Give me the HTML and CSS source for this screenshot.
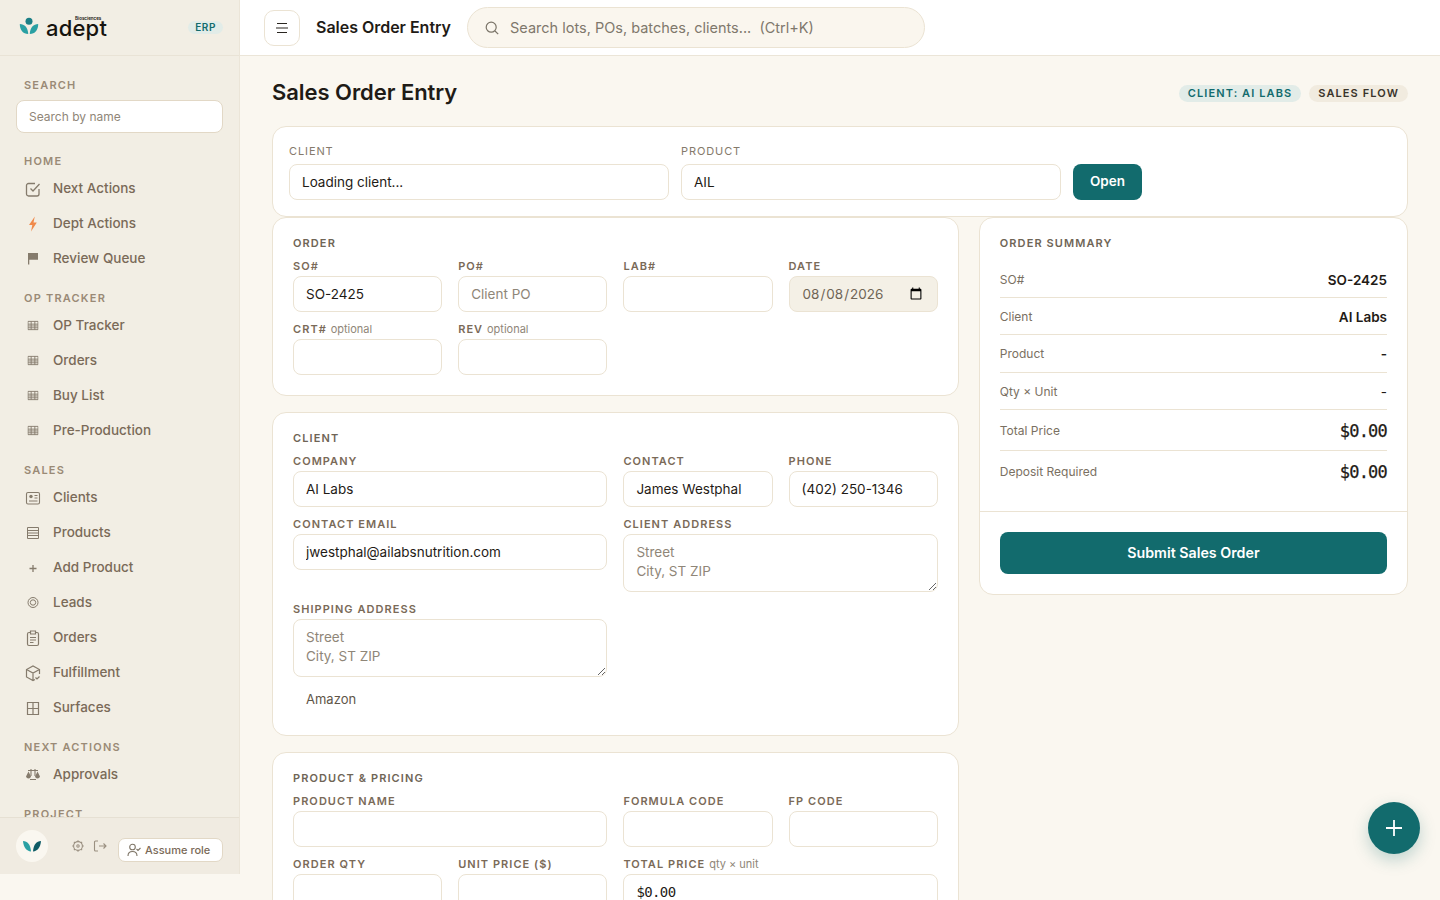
FILE: index.html
```html
<!DOCTYPE html>
<html lang="en">
<head>
  <meta charset="utf-8">
  <title>Sales Order Entry</title>
  <link rel="stylesheet" href="styles.css">
</head>
<body>
  <svg class="defs" width="0" height="0">
    <symbol id="i-table" viewBox="0 0 12 12">
      <path d="M.5 1.500h11v9H.5zM.5 4.500h11M.5 6.500h11M.5 8.500h11M4 1.500v9M8 1.500v9" fill="none" stroke="currentColor"/>
    </symbol>
  </svg>

  <aside class="sidebar">
    <div class="brand">
      <svg class="brand-mark" width="20" height="20" viewBox="0 0 20 20">
        <circle cx="10" cy="4.200" r="3.500" fill="#1c7f86"/>
        <path d="M.8 7c4.700 0 8.200 3.400 8.400 10C4 17 .8 13 .8 7z" fill="#2aa0a3"/>
        <path d="M19.200 7c-4.700 0-8.200 3.400-8.400 10C16 17 19.200 13 19.200 7z" fill="#2aa0a3"/>
      </svg>
      <div class="brand-name"><span class="brand-sub">Biosciences</span>adept</div>
      <span class="erp">ERP</span>
    </div>

    <div class="side-scroll">
      <div class="side-label">Search</div>
      <input class="side-search" type="text" placeholder="Search by name">

      <div class="side-label group">Home</div>
      <a class="nav-item">
        <svg viewBox="0 0 18 18"><path d="M15 9v5a2 2 0 0 1-2 2H4.500a2 2 0 0 1-2-2V5.500a2 2 0 0 1 2-2H11M6.500 8.500l2.500 2.500 6.500-7" fill="none" stroke="currentColor" stroke-width="1.300"/></svg>
        Next Actions
      </a>
      <a class="nav-item">
        <svg viewBox="0 0 18 18"><path d="M10.800 1.500 5 10h3.300L7 16.500 12.800 7.500H9.500z" fill="#f08a4b"/></svg>
        Dept Actions
      </a>
      <a class="nav-item">
        <svg viewBox="0 0 18 18"><path d="M4 3h10v6.800H5.300V14.500H4z" fill="currentColor"/></svg>
        Review Queue
      </a>

      <div class="side-label group">OP Tracker</div>
      <a class="nav-item"><svg viewBox="0 0 18 18"><use href="#i-table" x="3.500" y="3" width="11" height="11"/></svg>OP Tracker</a>
      <a class="nav-item"><svg viewBox="0 0 18 18"><use href="#i-table" x="3.500" y="3" width="11" height="11"/></svg>Orders</a>
      <a class="nav-item"><svg viewBox="0 0 18 18"><use href="#i-table" x="3.500" y="3" width="11" height="11"/></svg>Buy List</a>
      <a class="nav-item"><svg viewBox="0 0 18 18"><use href="#i-table" x="3.500" y="3" width="11" height="11"/></svg>Pre-Production</a>

      <div class="side-label group">Sales</div>
      <a class="nav-item">
        <svg viewBox="0 0 18 18"><g fill="none" stroke="currentColor" stroke-width="1.100"><rect x="2.500" y="3.500" width="13" height="11.500" rx="1.500"/><path d="M10.500 6.500h3M10.500 9h3M5 12h8.500"/></g><circle cx="7" cy="7.500" r="1.700" fill="currentColor"/></svg>
        Clients
      </a>
      <a class="nav-item">
        <svg viewBox="0 0 18 18"><path d="M3.500 3.500h11v11h-11zM3.500 6.500h11M3.500 9h11M3.500 11.500h11" fill="none" stroke="currentColor"/></svg>
        Products
      </a>
      <a class="nav-item">
        <svg viewBox="0 0 18 18"><path d="M9 6v7M5.500 9.500h7" fill="none" stroke="currentColor" stroke-width="1.300"/></svg>
        Add Product
      </a>
      <a class="nav-item">
        <svg viewBox="0 0 18 18"><g fill="none" stroke="currentColor"><circle cx="9" cy="8.500" r="5"/><circle cx="9" cy="8.500" r="2.700"/></g></svg>
        Leads
      </a>
      <a class="nav-item">
        <svg viewBox="0 0 18 18"><path d="M6.500 3.500H5a1.500 1.500 0 0 0-1.500 1.500v10A1.500 1.500 0 0 0 5 16.500h8a1.500 1.500 0 0 0 1.500-1.500V5A1.500 1.500 0 0 0 13 3.500h-1.500M6.500 2h5v3h-5zM6 8.500h6M6 11h6M6 13.500h3.500" fill="none" stroke="currentColor" stroke-width="1.200"/></svg>
        Orders
      </a>
      <a class="nav-item">
        <svg viewBox="0 0 18 18"><path d="M15.500 10V5.500L9 2 2.500 5.500v7.500L9 16.500l2-1M2.500 5.500 9 9l6.500-3.500M9 9v7.500M11.500 13.500l1.500 1.500 2.500-2.500" fill="none" stroke="currentColor" stroke-width="1.200"/></svg>
        Fulfillment
      </a>
      <a class="nav-item">
        <svg viewBox="0 0 18 18"><path d="M3.500 3.500h11v12h-11zM3.500 9.500h11M9 3.500v12" fill="none" stroke="currentColor" stroke-width="1.200"/></svg>
        Surfaces
      </a>

      <div class="side-label group">Next Actions</div>
      <a class="nav-item">
        <svg viewBox="0 0 18 18"><path d="M7 3v7M11 3v7M4 4.500h10M6 13.500h6" fill="none" stroke="currentColor" stroke-width="1.100"/><path d="M4.500 5.500 2 10.500a2.600 2.600 0 0 0 5 0zM13.500 5.500l-2.500 5a2.600 2.600 0 0 0 5 0z" fill="currentColor"/></svg>
        Approvals
      </a>

      <div class="side-label group">Project</div>
    </div>

    <div class="side-foot">
      <div class="avatar">
        <svg width="18" height="12" viewBox="0 0 18 12"><path d="M0 1c4.500 0 7.500 3.500 8 10.500C3.500 11 .5 7.500 0 1z" fill="#2aa0a3"/><path d="M18 1c-4.500 0-7.500 3.500-8 10.500C14.500 11 17.500 7.500 18 1z" fill="#0f5c66"/></svg>
      </div>
      <svg class="foot-icon" viewBox="0 0 14 14"><g fill="none" stroke="currentColor" stroke-width="1.100"><circle cx="7" cy="7" r="4.400"/><circle cx="7" cy="7" r="1.200"/><path d="M7 1.200v1.400M7 11.400v1.400M1.200 7h1.400M11.400 7h1.400M2.900 2.900l1 1M10.100 10.100l1 1M2.900 11.100l1-1M10.100 3.900l1-1"/></g></svg>
      <svg class="foot-icon" viewBox="0 0 14 14"><path d="M5 2H2.500A1 1 0 0 0 1.500 3v8a1 1 0 0 0 1 1H5M6 7h7M10.500 4.500 13 7l-2.500 2.500" fill="none" stroke="currentColor" stroke-width="1.100"/></svg>
      <button class="assume">
        <svg width="14" height="14" viewBox="0 0 14 14"><path d="M1 13c0-3 2-4.500 4.500-4.500S10 10 10 13M9.500 6l1.500 1.500L13.500 5" fill="none" stroke="currentColor" stroke-width="1.100"/><circle cx="5.500" cy="4" r="2.800" fill="none" stroke="currentColor" stroke-width="1.100"/></svg>
        Assume role
      </button>
    </div>
  </aside>

  <div class="main">
    <header class="topbar">
      <button class="menu-btn">
        <svg width="14" height="14" viewBox="0 0 14 14"><path d="M2 2.500h10M1 7h12M2 11.500h10" fill="none" stroke="#2a2620" stroke-width="1.200"/></svg>
      </button>
      <div class="top-title">Sales Order Entry</div>
      <div class="top-search">
        <svg width="16" height="16" viewBox="0 0 16 16"><circle cx="7.200" cy="7.200" r="5" fill="none" stroke="#7a7468" stroke-width="1.200"/><path d="m11 11 3.200 3.200" fill="none" stroke="#7a7468" stroke-width="1.200"/></svg>
        <input type="text" placeholder="Search lots, POs, batches, clients...  (Ctrl+K)">
      </div>
    </header>

    <main class="content">
      <div class="page-head">
        <h1>Sales Order Entry</h1>
        <div class="chips">
          <span class="chip chip-teal">Client: AI Labs</span>
          <span class="chip chip-sand">Sales Flow</span>
        </div>
      </div>

      <section class="card lookup">
        <div class="lookup-field">
          <label>Client</label>
          <input type="text" value="Loading client...">
        </div>
        <div class="lookup-field">
          <label>Product</label>
          <input type="text" value="AIL">
        </div>
        <button class="btn-open">Open</button>
      </section>

      <div class="columns">
        <div class="left-col">
          <section class="card form-card">
            <h2>Order</h2>
            <div class="form-grid">
              <div class="field"><label>SO#</label><input type="text" value="SO-2425"></div>
              <div class="field"><label>PO#</label><input type="text" placeholder="Client PO"></div>
              <div class="field"><label>LAB#</label><input type="text"></div>
              <div class="field"><label>Date</label><input class="date" type="date" value="2026-08-08"></div>
              <div class="field"><label>CRT# <small>optional</small></label><input type="text"></div>
              <div class="field"><label>REV <small>optional</small></label><input type="text"></div>
            </div>
          </section>

          <section class="card form-card">
            <h2>Client</h2>
            <div class="form-grid">
              <div class="field span2"><label>Company</label><input type="text" value="AI Labs"></div>
              <div class="field"><label>Contact</label><input type="text" value="James Westphal"></div>
              <div class="field"><label>Phone</label><input type="text" value="(402) 250-1346"></div>
              <div class="field span2"><label>Contact Email</label><input type="text" value="jwestphal@ailabsnutrition.com"></div>
              <div class="field span2"><label>Client Address</label><textarea placeholder="Street&#10;City, ST ZIP"></textarea></div>
              <div class="field span2"><label>Shipping Address</label><textarea placeholder="Street&#10;City, ST ZIP"></textarea></div>
              <div class="channel">Amazon</div>
            </div>
          </section>

          <section class="card form-card">
            <h2>Product &amp; Pricing</h2>
            <div class="form-grid">
              <div class="field span2"><label>Product Name</label><input type="text"></div>
              <div class="field"><label>Formula Code</label><input type="text"></div>
              <div class="field"><label>FP Code</label><input type="text"></div>
              <div class="field"><label>Order Qty</label><input type="text"></div>
              <div class="field"><label>Unit Price ($)</label><input type="text"></div>
              <div class="field span2"><label>Total Price <small>qty × unit</small></label><input class="mono" type="text" value="$0.00"></div>
            </div>
          </section>
        </div>

        <aside class="card summary">
          <div class="summary-body">
            <h2>Order Summary</h2>
            <div class="sum-row"><span>SO#</span><b>SO-2425</b></div>
            <div class="sum-row"><span>Client</span><b>AI Labs</b></div>
            <div class="sum-row tall"><span>Product</span><b>-</b></div>
            <div class="sum-row"><span>Qty × Unit</span><b class="light">-</b></div>
            <div class="sum-row money"><span>Total Price</span><b>$0.00</b></div>
            <div class="sum-row money"><span>Deposit Required</span><b>$0.00</b></div>
          </div>
          <div class="summary-foot">
            <button class="btn-submit">Submit Sales Order</button>
          </div>
        </aside>
      </div>
    </main>
  </div>

  <button class="fab">
    <svg width="18" height="18" viewBox="0 0 18 18"><path d="M9 1v16M1 9h16" fill="none" stroke="#fff" stroke-width="1.800"/></svg>
  </button>
</body>
</html>
```

FILE: styles.css
```css
* {
  box-sizing: border-box;
  margin: 0;
  padding: 0;
}

body {
  display: flex;
  height: 900px;
  overflow: hidden;
  background: #faf7f0;
  color: #1f1b16;
  font-family: Inter, "Liberation Sans", sans-serif;
  font-size: 13.500px;
}

input,
textarea,
button {
  font-family: inherit;
}

.defs {
  position: absolute;
}

/* sidebar */
.sidebar {
  display: flex;
  flex-direction: column;
  flex: none;
  width: 240px;
  height: 874px;
  background: #f2eee4;
  border-right: 1px solid #ebe5d8;
}

.brand {
  display: flex;
  align-items: center;
  flex: none;
  height: 56px;
  padding: 0 16px 0 19px;
  border-bottom: 1px solid #e9e3d6;
}

.brand-mark {
  flex: none;
  margin-top: -2px;
}

.brand-name {
  position: relative;
  margin-left: 7px;
  font-size: 22px;
  font-weight: 500;
  letter-spacing: 0.2px;
  line-height: 28px;
  color: #17140f;
}

.brand-sub {
  position: absolute;
  top: 2px;
  left: 29px;
  font-size: 4.500px;
  font-weight: 600;
  line-height: 5px;
  letter-spacing: 0;
}

.erp {
  margin-left: auto;
  padding: 2px 7px;
  border-radius: 999px;
  background: #e2ece8;
  color: #126b6d;
  font-size: 10px;
  font-weight: 600;
  letter-spacing: 0.6px;
  line-height: 9px;
}

.side-scroll {
  flex: 1;
  min-height: 0;
  overflow: hidden;
  padding: 23px 16px 0;
}

.side-label {
  margin-bottom: 2px;
  padding-left: 8px;
  color: #9a8a76;
  font-size: 11px;
  font-weight: 600;
  letter-spacing: 1.2px;
  line-height: 13px;
  text-transform: uppercase;
}

.side-label.group {
  margin-top: 17px;
}

.side-search {
  display: block;
  width: 207px;
  height: 33px;
  margin-top: 8px;
  margin-bottom: 22px;
  padding: 0 12px;
  background: #fff;
  border: 1px solid #e2d8c6;
  border-radius: 8px;
  font-size: 12px;
  outline: 0;
}

.side-search::placeholder {
  color: #8f8678;
}

.nav-item {
  display: flex;
  align-items: center;
  gap: 11px;
  height: 35px;
  padding-left: 8px;
  color: #7a6a58;
  font-size: 13.500px;
  font-weight: 500;
  line-height: 18px;
}

.nav-item svg {
  flex: none;
  width: 18px;
  height: 18px;
  margin-top: 2px;
  color: #857b6c;
}

.side-foot {
  display: flex;
  align-items: center;
  flex: none;
  height: 57px;
  padding: 0 16px;
  border-top: 1px solid #e6e0d3;
  background: #f0ebe1;
}

.avatar {
  display: flex;
  align-items: center;
  justify-content: center;
  flex: none;
  width: 32px;
  height: 32px;
  border-radius: 50%;
  background: #faf7f0;
}

.foot-icon {
  flex: none;
  width: 14px;
  height: 14px;
  margin-left: 8px;
  color: #9a8f80;
}

.foot-icon:first-of-type {
  margin-left: 23px;
}

.assume {
  display: flex;
  align-items: center;
  gap: 4px;
  flex: none;
  width: 105px;
  height: 24px;
  margin-top: 8px;
  margin-left: 11px;
  padding-left: 8px;
  background: #fff;
  border: 1px solid #e2d8c6;
  border-radius: 7px;
  color: #7a6a58;
  font-size: 11px;
  font-weight: 500;
}

.assume svg {
  color: #7f7668;
}

/* top bar */
.main {
  display: flex;
  flex-direction: column;
  flex: 1;
  min-width: 0;
}

.topbar {
  display: flex;
  align-items: center;
  flex: none;
  height: 56px;
  padding: 0 24px;
  background: #fff;
  border-bottom: 1px solid #ebe5d8;
}

.menu-btn {
  display: flex;
  align-items: center;
  justify-content: center;
  width: 36px;
  height: 36px;
  background: #fff;
  border: 1px solid #ebe3d3;
  border-radius: 10px;
}

.top-title {
  width: 135px;
  margin-left: 16px;
  padding-bottom: 2px;
  font-size: 16px;
  font-weight: 600;
  letter-spacing: -0.02px;
  white-space: nowrap;
}

.top-search {
  display: flex;
  align-items: center;
  gap: 10px;
  width: 458px;
  height: 41px;
  margin-left: 16px;
  padding: 0 16px;
  background: #faf6ee;
  border: 1px solid #ebe3d3;
  border-radius: 999px;
}

.top-search input {
  flex: 1;
  border: 0;
  outline: 0;
  background: transparent;
  font-size: 14.500px;
  white-space: pre;
}

.top-search input::placeholder {
  color: #7f786c;
}

/* content */
.content {
  flex: 1;
  min-height: 0;
  overflow: hidden;
  padding: 0 32px;
}

.page-head {
  display: flex;
  align-items: center;
  justify-content: space-between;
  height: 70px;
  padding-top: 2px;
}

h1 {
  font-size: 22px;
  font-weight: 600;
  letter-spacing: -0.05px;
}

.chips {
  display: flex;
  gap: 8px;
  margin-top: 2px;
}

.chip {
  padding: 2px 9px;
  border-radius: 999px;
  font-size: 11px;
  font-weight: 600;
  letter-spacing: 1.1px;
  line-height: 13px;
  text-transform: uppercase;
}

.chip-teal {
  background: #e2ece8;
  color: #126b6d;
}

.chip-sand {
  background: #f1ebdf;
  color: #3a342b;
}

.card {
  background: #fff;
  border: 1px solid #ebe3d3;
  border-radius: 14px;
}

.lookup {
  display: flex;
  align-items: flex-end;
  gap: 12px;
  height: 91px;
  padding: 0 16px 16px;
}

.lookup-field {
  width: 380px;
}

.lookup-field label {
  display: block;
  margin-bottom: 6px;
  color: #857a6b;
  font-size: 11px;
  letter-spacing: 0.9px;
  line-height: 13px;
  text-transform: uppercase;
}

input,
textarea {
  color: #1f1b16;
}

.lookup-field input,
.field input,
.field textarea {
  display: block;
  width: 100%;
  height: 36px;
  padding: 0 12px;
  background: #fff;
  border: 1px solid #ebe3d3;
  border-radius: 8px;
  font-size: 13.500px;
  outline: 0;
}

.btn-open {
  width: 69px;
  height: 36px;
  padding-bottom: 2px;
  background: #126b6d;
  border: 0;
  border-radius: 8px;
  color: #fff;
  font-size: 13.500px;
  font-weight: 600;
}

.columns {
  display: grid;
  grid-template-columns: 1.6fr 1fr;
  gap: 20px;
  align-items: start;
}

.left-col {
  display: flex;
  flex-direction: column;
  gap: 16px;
}

.form-card {
  padding: 20px;
}

h2 {
  color: #6f6556;
  font-size: 11px;
  font-weight: 600;
  letter-spacing: 1.1px;
  line-height: 11px;
  text-transform: uppercase;
}

.form-grid {
  display: grid;
  grid-template-columns: repeat(4, minmax(0, 1fr));
  gap: 12px 16px;
  margin-top: 12px;
}

.span2 {
  grid-column: span 2;
}

.field label {
  display: block;
  height: 15px;
  color: #7a6a58;
  font-size: 11px;
  font-weight: 600;
  letter-spacing: 1.050px;
  line-height: 11px;
  text-transform: uppercase;
}

.field small {
  color: #8f8678;
  font-size: 11px;
  font-weight: 400;
  letter-spacing: 0;
  text-transform: none;
}

.field input::placeholder,
.field textarea::placeholder {
  color: #8f8678;
  opacity: 1;
}

.field textarea {
  height: 58px;
  padding: 8px 12px;
  line-height: 19px;
  resize: vertical;
}

.field input.date {
  background: #f4f0e6;
  color: #6f6556;
}

.field input.mono {
  font-family: "DejaVu Sans Mono", monospace;
  font-size: 14px;
  letter-spacing: -0.6px;
}

.channel {
  grid-column: 1 / span 2;
  height: 26px;
  padding-left: 13px;
  color: #5f5648;
  font-size: 13px;
  line-height: 20px;
}

/* summary */
.summary-body {
  padding: 20px 20px 20px;
  border-bottom: 1px solid #ebe3d3;
}

.summary-body h2 {
  margin-bottom: 12px;
}

.sum-row {
  display: flex;
  align-items: center;
  justify-content: space-between;
  padding: 9.500px 0 8.500px;
  border-bottom: 1px solid #ebe3d3;
  line-height: 18px;
}

.sum-row.tall {
  padding-bottom: 9.500px;
}

.sum-row:last-child {
  border-bottom: 0;
}

.sum-row span {
  color: #7a7062;
  font-size: 12px;
}

.sum-row b {
  font-size: 13.500px;
  font-weight: 600;
}

.sum-row b.light {
  font-weight: 400;
}

.sum-row.money {
  line-height: 22px;
}

.sum-row.money b {
  font-family: "DejaVu Sans Mono", monospace;
  font-size: 17px;
  font-weight: 400;
  letter-spacing: -0.8px;
  -webkit-text-stroke: 0.25px #1f1b16;
}

.summary-foot {
  padding: 20px;
}

.btn-submit {
  display: block;
  width: 100%;
  height: 42px;
  padding-bottom: 2px;
  background: #126b6d;
  border: 0;
  border-radius: 8px;
  color: #fff;
  font-size: 14.250px;
  font-weight: 600;
}

.fab {
  position: fixed;
  right: 20px;
  bottom: 46px;
  display: flex;
  align-items: center;
  justify-content: center;
  width: 52px;
  height: 52px;
  background: #126b6d;
  border: 0;
  border-radius: 50%;
  box-shadow: 0 6px 16px rgba(18, 107, 109, 0.25);
}
```
